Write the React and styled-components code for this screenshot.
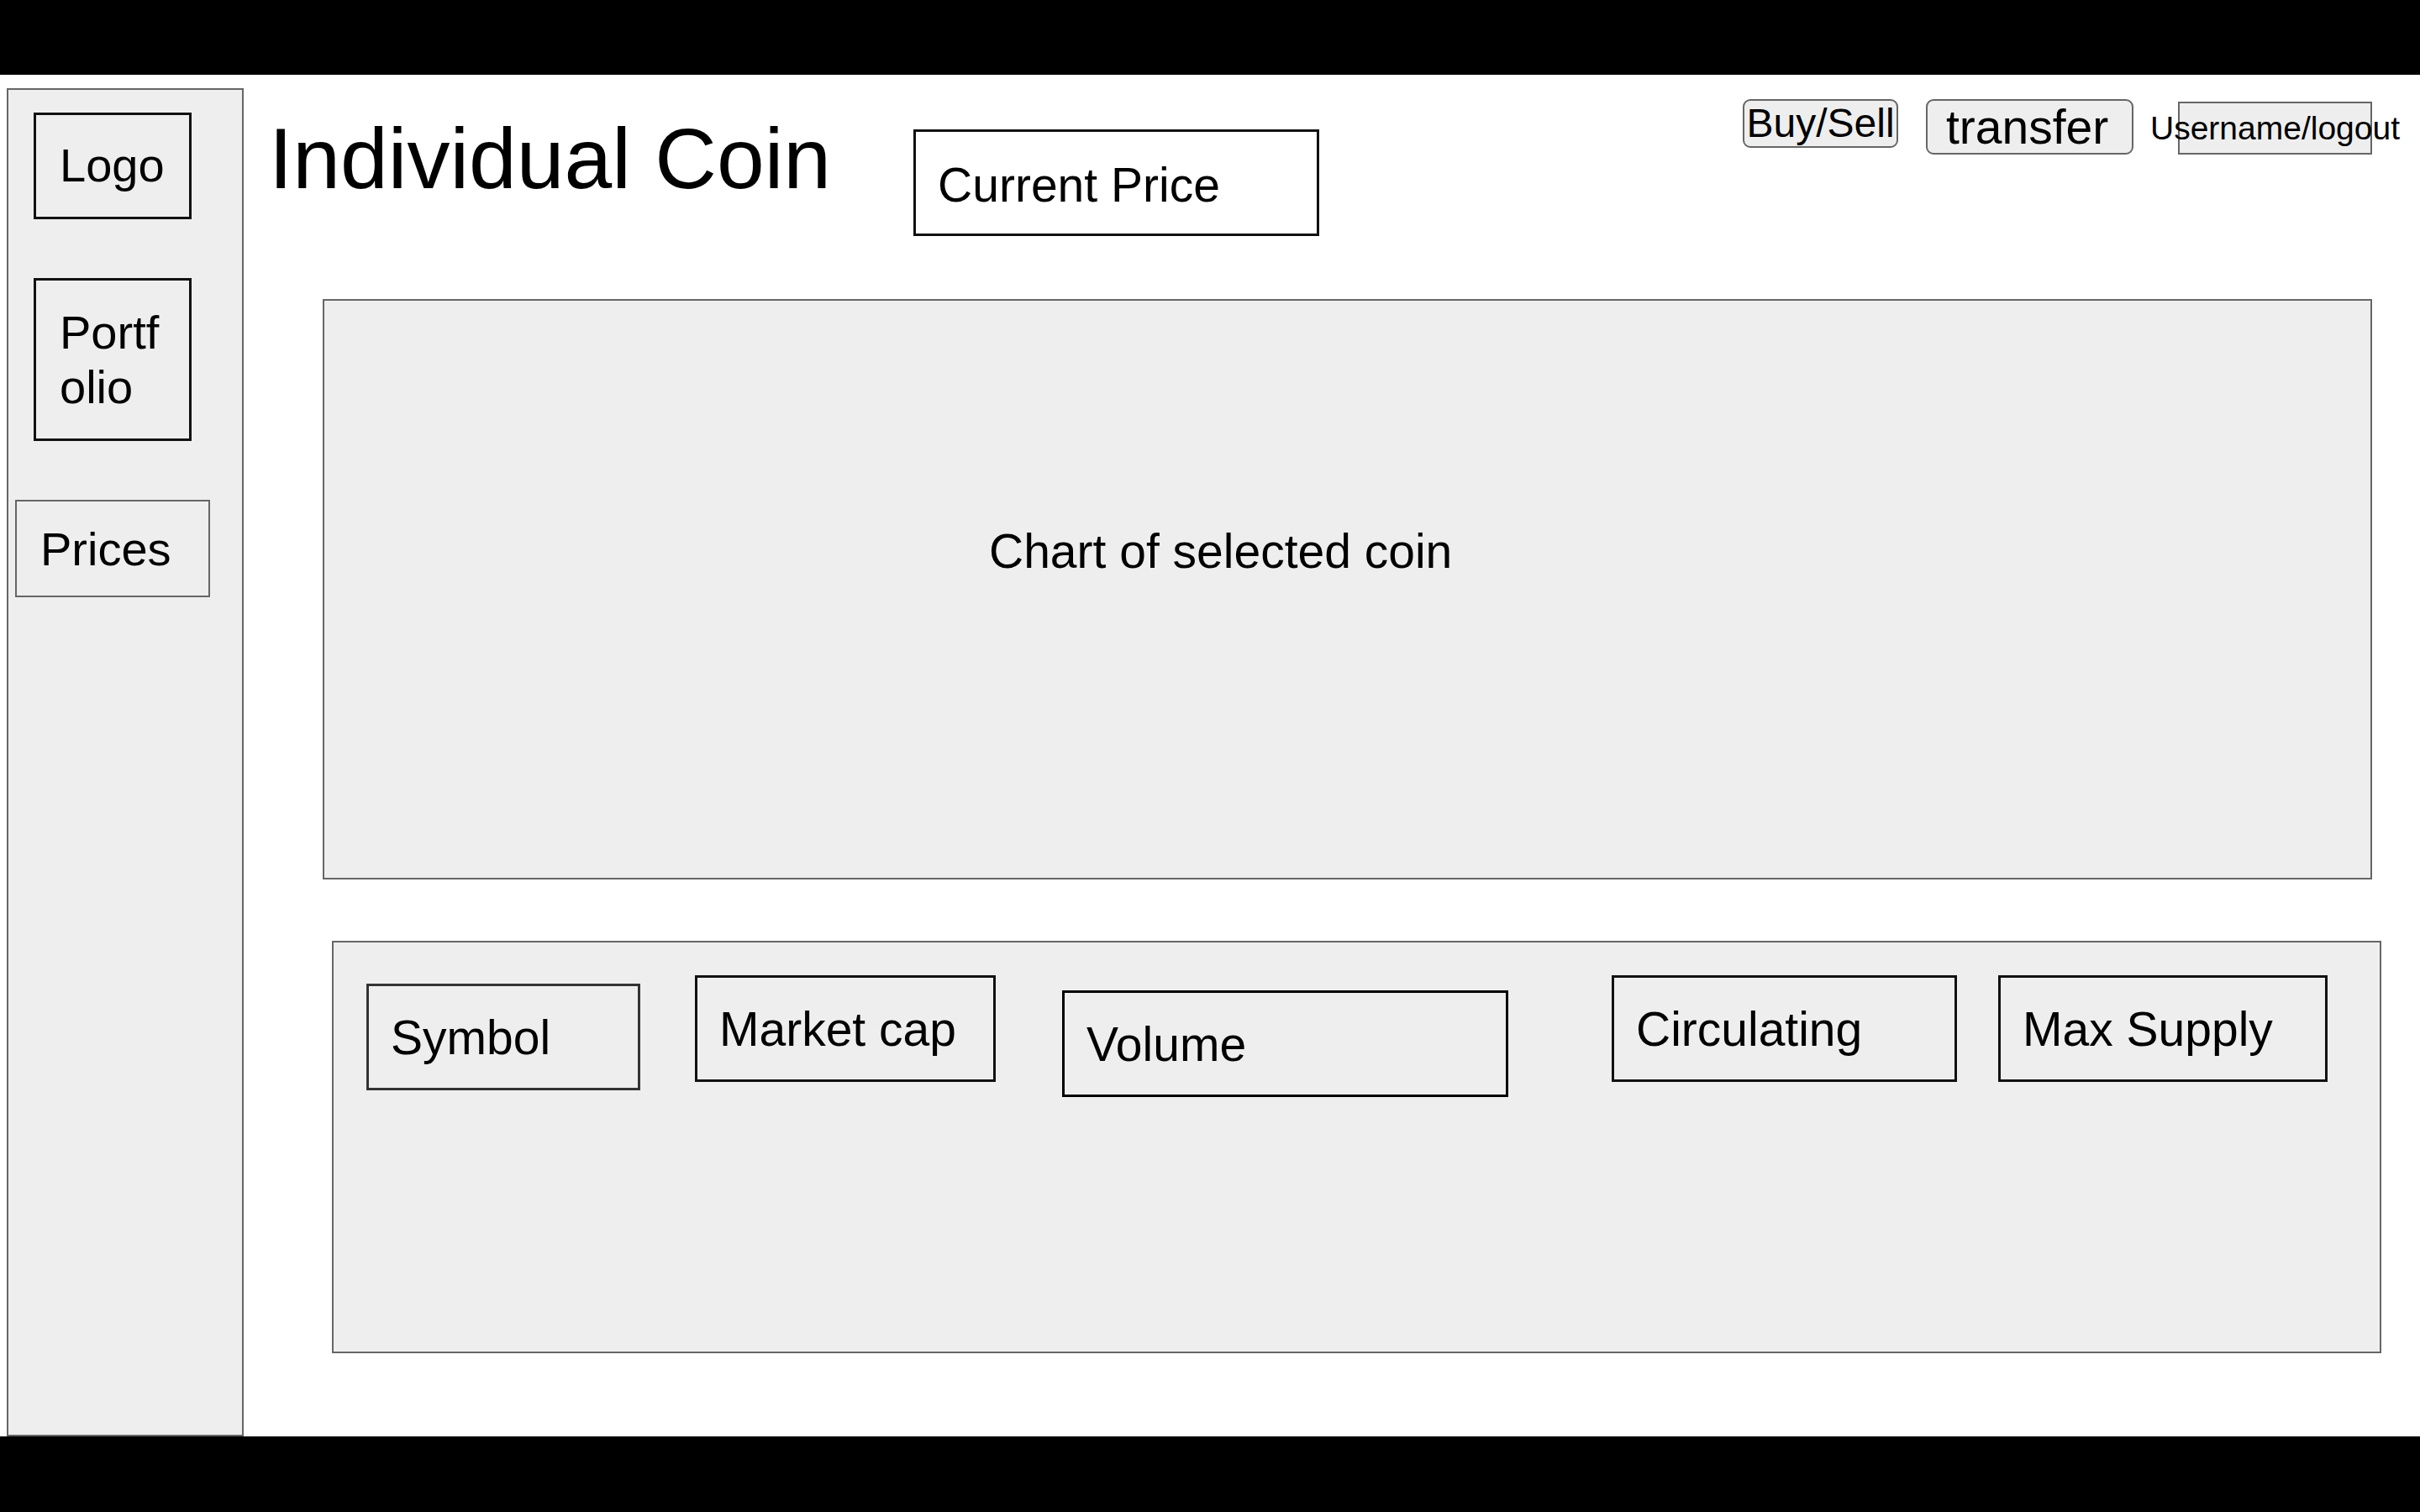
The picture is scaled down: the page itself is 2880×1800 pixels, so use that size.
import styled, { createGlobalStyle } from 'styled-components'

const GlobalStyle = createGlobalStyle`
  html, body {
    margin: 0;
    padding: 0;
    background: #fff;
  }
  body {
    font-family: "Liberation Sans", Arial, sans-serif;
    color: #000;
  }
  * {
    box-sizing: border-box;
  }
`

const navItems = [
  { label: 'Logo', left: 30, width: 188, height: 127, pad: '27px 22px 0 28px', border: '#111', bold: true },
  { label: 'Portfolio', left: 30, width: 188, height: 194, pad: '29px 22px 0 28px', border: '#111', bold: true },
  { label: 'Prices', left: 8, width: 232, height: 116, pad: '24px 18px 0 28px', border: '#666' },
]

const stats = [
  { label: 'Symbol', left: 39, top: 49, width: 326, border: '#333' },
  { label: 'Market cap', left: 65, top: 39, width: 358, border: '#111' },
  { label: 'Volume', left: 79, top: 57, width: 531, border: '#000' },
  { label: 'Circulating', left: 123, top: 39, width: 411, border: '#111' },
  { label: 'Max Supply', left: 49, top: 39, width: 392, border: '#111' },
]

export default function App() {
  return (
    <>
      <GlobalStyle />
      <Frame>
        <BlackBand $h={89} />
        <Canvas>
          <Sidebar>
            {navItems.map((item) => (
              <NavBox
                key={item.label}
                $left={item.left}
                $width={item.width}
                $height={item.height}
                $pad={item.pad}
                $border={item.border}
                $bold={item.bold}
              >
                {item.label}
              </NavBox>
            ))}
          </Sidebar>

          <Main>
            <Header>
              <Title>Individual Coin</Title>
              <PriceBox>Current Price</PriceBox>
              <Actions>
                <ActionButton $width={185} $height={58} $size={48}>
                  Buy/Sell
                </ActionButton>
                <ActionButton $width={247} $height={66} $size={57} $gap={33} $start>
                  transfer
                </ActionButton>
                <UserBox>Username/logout</UserBox>
              </Actions>
            </Header>

            <ChartPanel>
              <ChartLabel>Chart of selected coin</ChartLabel>
            </ChartPanel>

            <StatsPanel>
              {stats.map((s) => (
                <StatBox
                  key={s.label}
                  $left={s.left}
                  $top={s.top}
                  $width={s.width}
                  $border={s.border}
                >
                  {s.label}
                </StatBox>
              ))}
            </StatsPanel>
          </Main>
        </Canvas>
        <BlackBand $h={90} />
      </Frame>
    </>
  )
}

const Frame = styled.div`
  width: 2880px;
  height: 1800px;
  display: flex;
  flex-direction: column;
  overflow: hidden;
`
const BlackBand = styled.div`
  height: ${(p) => p.$h}px;
  flex-shrink: 0;
  background: #000;
`
const Canvas = styled.div`
  flex: 1;
  min-height: 0;
  display: flex;
  align-items: stretch;
`
const Sidebar = styled.nav`
  width: 282px;
  flex-shrink: 0;
  margin: 16px 0 0 8px;
  padding-top: 27px;
  display: flex;
  flex-direction: column;
  align-items: flex-start;
  gap: 70px;
  background: #eeeeee;
  border: 2px solid #666;
`
const NavBox = styled.div`
  margin-left: ${(p) => p.$left}px;
  width: ${(p) => p.$width}px;
  height: ${(p) => p.$height}px;
  padding: ${(p) => p.$pad};
  border: ${(p) => (p.$bold ? 3 : 2)}px solid ${(p) => p.$border};
  font-size: 56px;
  line-height: 65px;
  word-break: break-all;
`
const Main = styled.main`
  flex: 1;
  min-width: 0;
  display: flex;
  flex-direction: column;
`
const Header = styled.header`
  display: flex;
  align-items: flex-start;
`
const Title = styled.h1`
  margin: 42px 0 0 30px;
  font-size: 102px;
  font-weight: 400;
  line-height: 117px;
  white-space: nowrap;
`
const PriceBox = styled.div`
  margin: 65px 0 0 98px;
  width: 483px;
  height: 127px;
  padding: 31px 0 0 26px;
  border: 3px solid #111;
  background: #fff;
  font-size: 57px;
  line-height: 65px;
`
const Actions = styled.div`
  margin: 29px 57px 0 auto;
  display: flex;
  align-items: flex-start;
`
const ActionButton = styled.button`
  margin-left: ${(p) => p.$gap || 0}px;
  width: ${(p) => p.$width}px;
  height: ${(p) => p.$height}px;
  padding: 0 0 0 ${(p) => (p.$start ? 22 : 0)}px;
  display: flex;
  align-items: center;
  justify-content: ${(p) => (p.$start ? 'flex-start' : 'center')};
  border: 2px solid #666;
  border-radius: 9px;
  background: #eeeeee;
  color: #000;
  font-family: inherit;
  font-size: ${(p) => p.$size}px;
  line-height: 1;
  white-space: nowrap;
`
const UserBox = styled.div`
  margin: 3px 0 0 53px;
  width: 231px;
  height: 63px;
  display: flex;
  align-items: center;
  justify-content: center;
  border: 2px solid #666;
  background: #eeeeee;
  font-size: 39px;
  white-space: nowrap;
`
const ChartPanel = styled.section`
  margin: 75px 57px 0 94px;
  height: 691px;
  padding: 266px 0 0 791px;
  border: 2px solid #666;
  background: #eeeeee;
`
const ChartLabel = styled.div`
  font-size: 57px;
  line-height: 65px;
  white-space: nowrap;
`
const StatsPanel = styled.section`
  margin: 73px 46px 0 105px;
  height: 491px;
  display: flex;
  align-items: flex-start;
  border: 2px solid #666;
  background: #eeeeee;
`
const StatBox = styled.div`
  margin: ${(p) => p.$top}px 0 0 ${(p) => p.$left}px;
  width: ${(p) => p.$width}px;
  height: 127px;
  flex-shrink: 0;
  padding: 29px 0 0 26px;
  border: 3px solid ${(p) => p.$border};
  font-size: 57px;
  line-height: 65px;
  white-space: nowrap;
`
